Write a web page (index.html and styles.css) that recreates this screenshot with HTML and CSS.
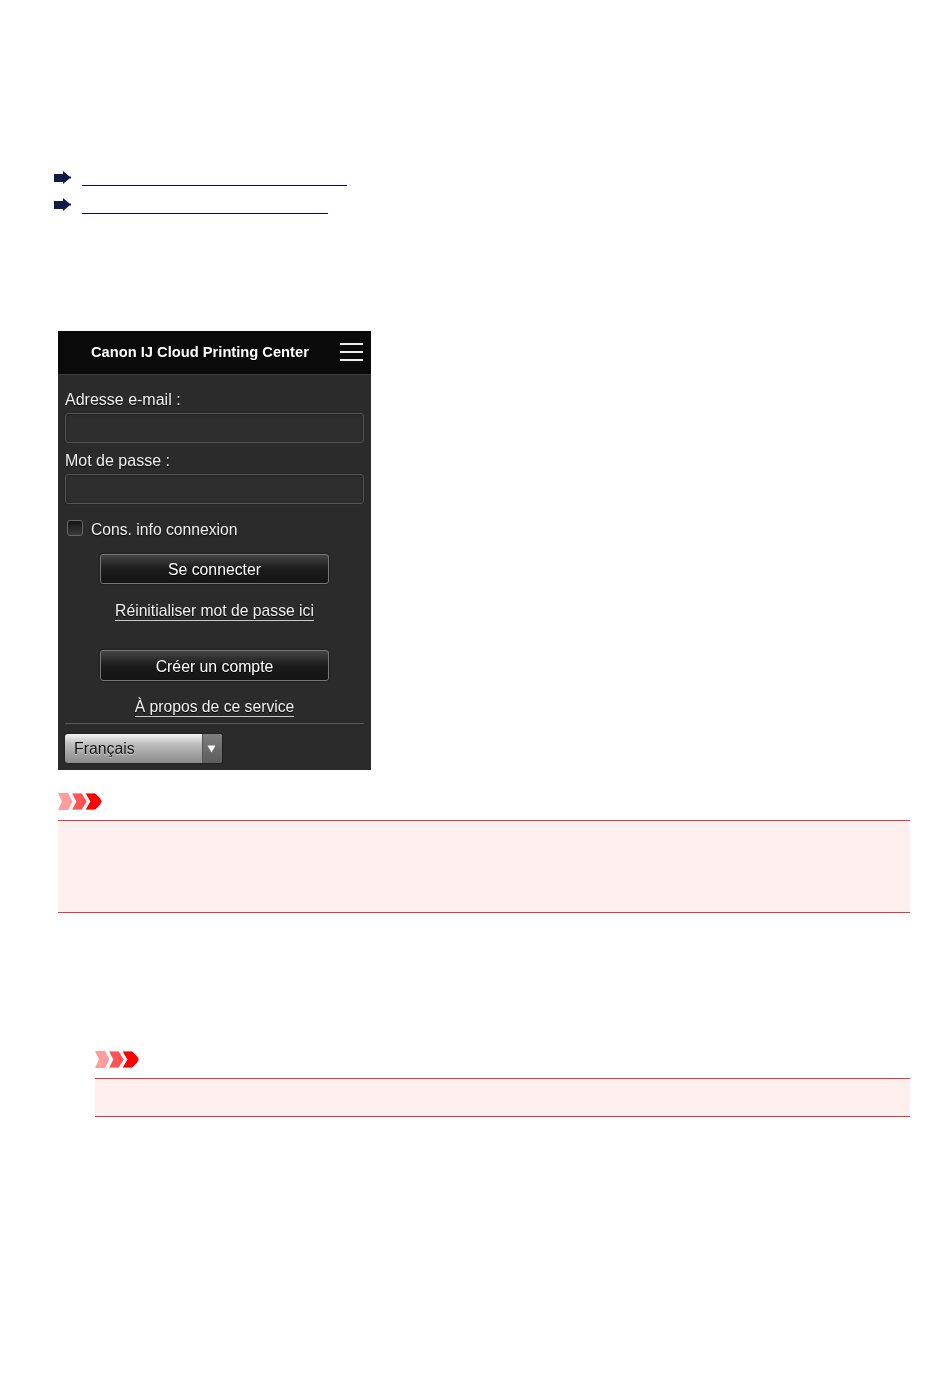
FILE: index.html
```html
<!DOCTYPE html>
<html lang="fr">
<head>
<meta charset="utf-8">
<title>Canon IJ Cloud Printing Center</title>
<link rel="stylesheet" href="styles.css">
</head>
<body>
<main class="page">
  <ul class="links">
    <li class="link-row">
      <svg class="arrow" viewBox="0 0 17 13"><path d="M0 3H9V0L15.500 5.500H17V7.500H15.500L9 13V11H0Z"/></svg>
      <a class="link link-first" href="#"></a>
    </li>
    <li class="link-row">
      <svg class="arrow" viewBox="0 0 17 13"><path d="M0 3H9V0L15.500 5.500H17V7.500H15.500L9 13V11H0Z"/></svg>
      <a class="link link-second" href="#"></a>
    </li>
  </ul>

  <section class="phone">
    <header class="phone-header">
      <h1 class="phone-title">Canon IJ Cloud Printing Center</h1>
      <div class="burger"><span></span><span></span><span></span></div>
    </header>
    <form class="phone-body">
      <label class="field-label">Adresse e-mail :</label>
      <div class="field"></div>
      <label class="field-label field-label-second">Mot de passe :</label>
      <div class="field"></div>
      <div class="remember"><span class="checkbox"></span><span class="remember-text">Cons. info connexion</span></div>
      <div class="btn btn-login">Se connecter</div>
      <div class="text-link-row reset-row"><a class="text-link">Réinitialiser mot de passe ici</a></div>
      <div class="btn btn-create">Créer un compte</div>
      <div class="text-link-row about-row"><a class="text-link">À propos de ce service</a></div>
      <hr class="divider">
      <div class="select">
        <span class="select-value">Français</span>
        <span class="select-arrow"><svg viewBox="0 0 9 8" width="9" height="8"><path d="M0.500 0.500H8.500L4.500 7.500Z" fill="#fff"/></svg></span>
      </div>
    </form>
  </section>

  <svg class="chevrons chevrons-first" viewBox="0 0 44 17"><path class="chevron-a" d="M0 0H10L14.500 8.500L10 17H0L4 8.500Z"/><path class="chevron-b" d="M13.500 0H24L29 8.500L24 17H13.500L18 8.500Z"/><path class="chevron-c" d="M27 0H37Q44 6 44 8.500Q44 11 37 17H27L32 8.500Z"/></svg>
  <div class="notice notice-large"></div>

  <div class="indented">
    <svg class="chevrons chevrons-second" viewBox="0 0 44 17"><path class="chevron-a" d="M0 0H10L14.500 8.500L10 17H0L4 8.500Z"/><path class="chevron-b" d="M13.500 0H24L29 8.500L24 17H13.500L18 8.500Z"/><path class="chevron-c" d="M27 0H37Q44 6 44 8.500Q44 11 37 17H27L32 8.500Z"/></svg>
    <div class="notice notice-small"></div>
  </div>
</main>
</body>
</html>
```
FILE: styles.css
```css
* { box-sizing: border-box; }
html, body { margin: 0; padding: 0; background: #fff; }
body { font-family: "Liberation Sans", Arial, sans-serif; }
.page { padding: 171px 40px 0 58px; min-height: 1397px; }

.links { list-style: none; margin: 0 0 0 -4px; padding: 0; }
.link-row { display: flex; align-items: flex-start; height: 27px; }
.arrow { width: 17px; height: 13px; fill: #0f1b45; flex: none; }
.link { display: block; margin-left: 11px; border-bottom: 1px solid #0000b4; }
.link-first { width: 265px; height: 15px; }
.link-second { width: 246px; height: 16px; }

.phone {
  width: 313px; height: 439px; margin-top: 106px;
  background: #2b2b2b; color: #f2f2f2;
  filter: blur(0.45px);
  text-shadow: 0 1px 1px #000;
}
.phone-header {
  height: 44px; background: #0a0a0a; border-bottom: 1px solid #3a3a3a;
  display: flex; align-items: center; padding: 0 8px 2px 33px;
}
.phone-title { flex: 1; margin: 0; font-size: 14.700px; font-weight: bold; color: #fff; }
.burger { display: flex; flex-direction: column; gap: 6px; width: 23px; }
.burger span { display: block; height: 2px; background: #eee; }

.phone-body { padding: 0 7px; display: flex; flex-direction: column; }
.field-label { font-size: 16px; line-height: 18px; margin-top: 16px; }
.field-label-second { margin-top: 9px; }
.field {
  height: 30px; margin-top: 4px; background: #2e2e2e;
  border: 1px solid #555; border-radius: 3px;
  box-shadow: 0 0 1px #111, inset 0 1px 2px #222;
}
.remember { display: flex; align-items: center; gap: 8px; font-size: 15.700px; height: 20px; margin-top: 15px; padding-left: 2px; }
.remember-text { padding-top: 2px; }
.checkbox {
  width: 16px; height: 16px; border: 1px solid #666; border-radius: 3px; margin-top: -3px;
  background: linear-gradient(#141414, #3a3a3a);
}
.btn {
  width: 229px; height: 30px; align-self: center;
  display: flex; align-items: center; justify-content: center;
  padding-top: 2px;
  font-size: 15.800px; color: #fff;
  border: 1px solid #777; border-radius: 3px;
  background: linear-gradient(#444, #1c1c1c 50%, #141414);
  box-shadow: 0 0 2px #111;
}
.btn-login { margin-top: 15px; }
.btn-create { height: 31px; margin-top: 29px; }
.text-link-row { display: flex; justify-content: center; }
.reset-row { margin-top: 18px; }
.about-row { margin-top: 17px; }
.text-link { font-size: 15.700px; line-height: 18px; border-bottom: 1px solid #c8c8c8; color: #f2f2f2; }
.divider { width: 100%; margin: 6px 0 0; border: 0; border-top: 1px solid #5a5a5a; height: 0; }
.select {
  width: 157px; height: 29px; margin-top: 10px; display: flex;
  border-radius: 3px; overflow: hidden;
  background: linear-gradient(#f5f5f5, #bdbdbd 35%, #8a8a8a);
  box-shadow: 0 0 2px #111;
  text-shadow: 0 1px 0 rgba(255, 255, 255, 0.5);
}
.select-value { flex: 1; padding-left: 9px; line-height: 30px; font-size: 15.800px; color: #111; }
.select-arrow {
  width: 20px; display: flex; align-items: center; justify-content: center;
  border-left: 1px solid #555; background: linear-gradient(#7e7e7e, #5c5c5c);
  padding-right: 2px;
}

.chevrons { display: block; width: 44px; height: 17px; }
.chevrons-first { margin-top: 23px; }
.chevron-a { fill: #ff9c9c; }
.chevron-b { fill: #ff5252; stroke: #fff; stroke-width: 0.8px; }
.chevron-c { fill: #ff0000; stroke: #fff; stroke-width: 0.8px; }
.notice { background: #ffefef; border-top: 1px solid #e03a3a; border-bottom: 1px solid #e03a3a; }
.notice-large { height: 93px; margin-top: 10px; }
.notice-small { height: 39px; margin-top: 10px; }
.indented { margin: 138px 0 0 37px; }
```
